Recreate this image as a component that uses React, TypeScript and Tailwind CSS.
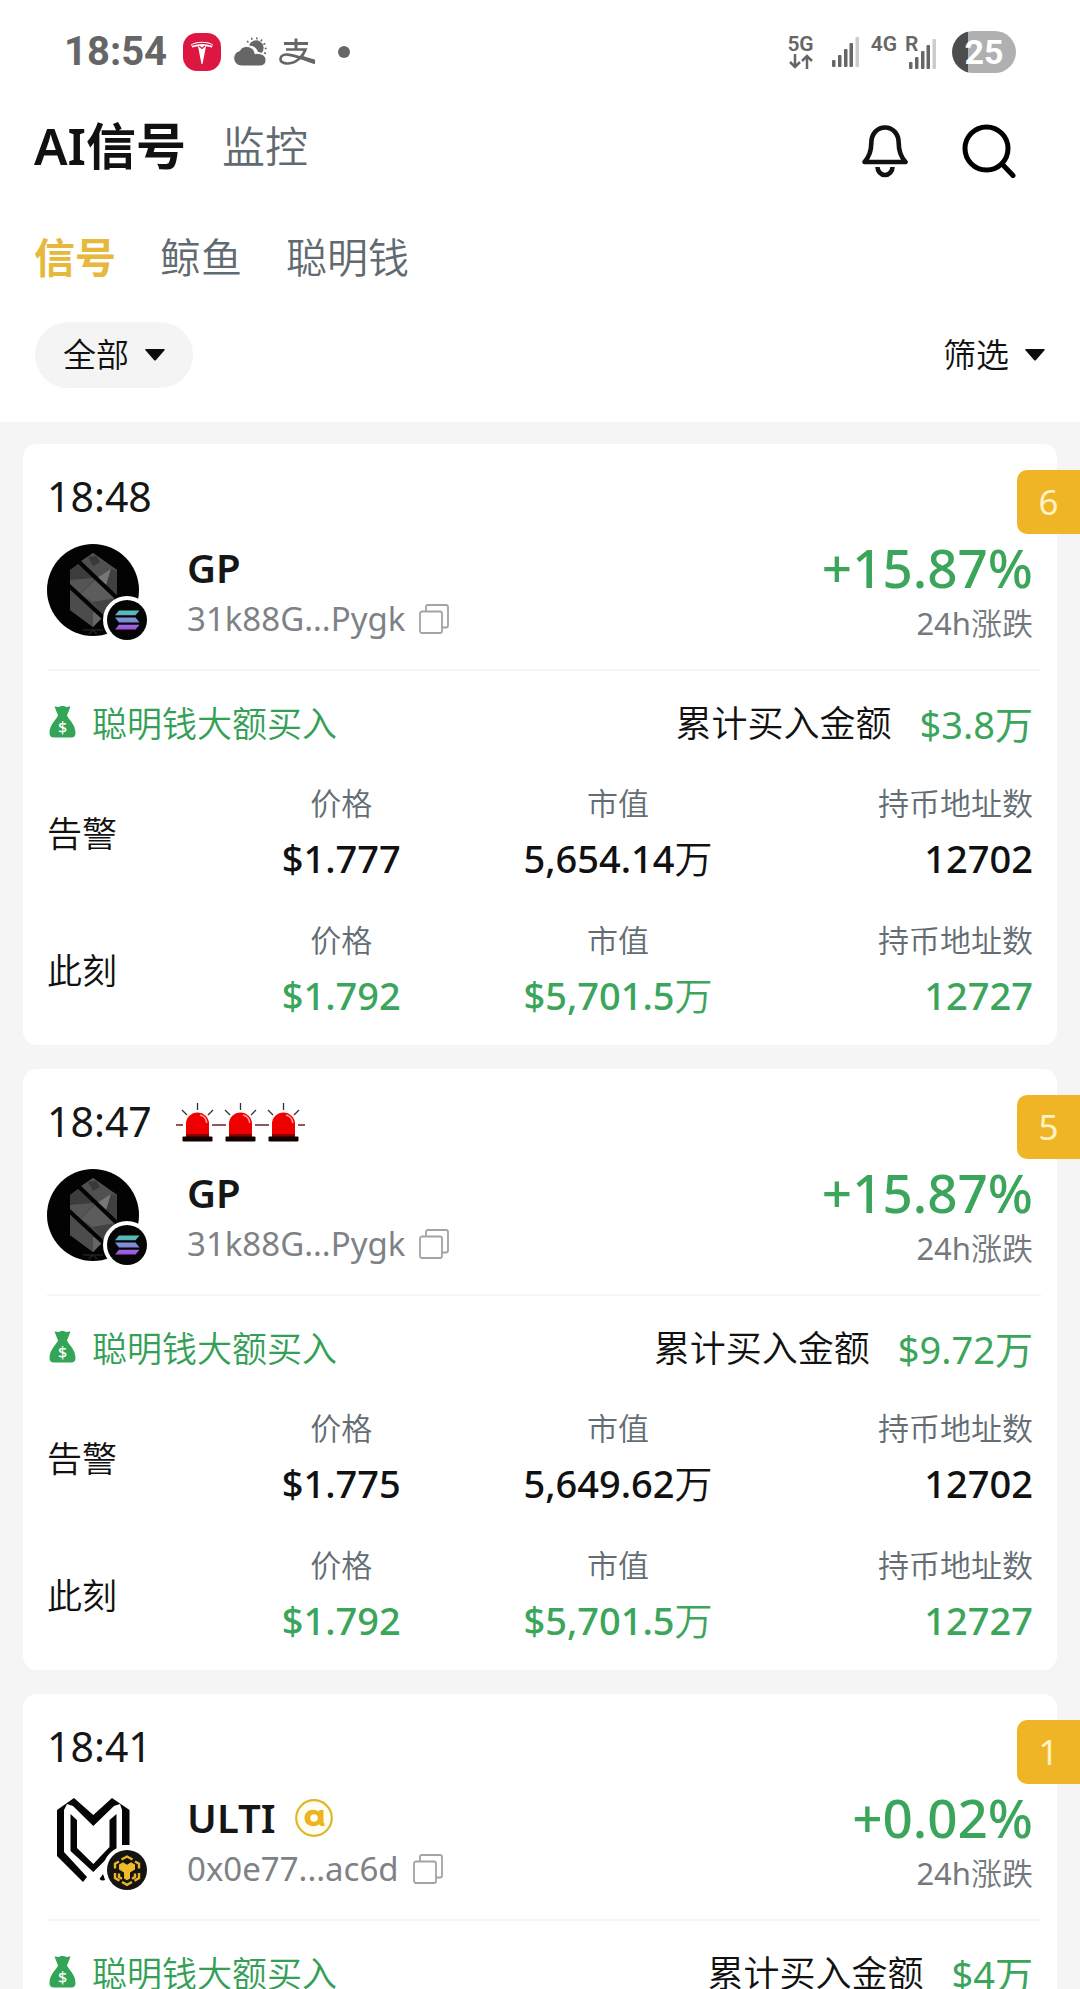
import { useState } from 'react';
import clsx from 'clsx';

interface Metric {
  label: string
  value: string
  unit?: string
}

interface SignalRow {
  title: string
  live: boolean
  metrics: Array<Metric>
}

interface Signal {
  id: number
  time: string
  sirens: number
  rank: number
  name: string
  alpha: boolean
  address: string
  chain: 'solana' | 'bnb'
  change: string
  amount: string
  rows: Array<SignalRow>
}

const buildRows = (alertPrice: string, alertCap: string): Array<SignalRow> => [
  {
    title: '告警',
    live: false,
    metrics: [
      { label: '价格', value: alertPrice },
      { label: '市值', value: alertCap, unit: '万' },
      { label: '持币地址数', value: '12702' },
    ],
  },
  {
    title: '此刻',
    live: true,
    metrics: [
      { label: '价格', value: '$1.792' },
      { label: '市值', value: '$5,701.5', unit: '万' },
      { label: '持币地址数', value: '12727' },
    ],
  },
]

const signals: Array<Signal> = [
  { id: 1, time: '18:48', sirens: 0, rank: 6, name: 'GP', alpha: false, address: '31k88G...Pygk', chain: 'solana', change: '+15.87%', amount: '$3.8万', rows: buildRows('$1.777', '5,654.14') },
  { id: 2, time: '18:47', sirens: 3, rank: 5, name: 'GP', alpha: false, address: '31k88G...Pygk', chain: 'solana', change: '+15.87%', amount: '$9.72万', rows: buildRows('$1.775', '5,649.62') },
  { id: 3, time: '18:41', sirens: 0, rank: 1, name: 'ULTI', alpha: true, address: '0x0e77...ac6d', chain: 'bnb', change: '+0.02%', amount: '$4万', rows: [] },
]

const TeslaIcon = () => (
  <svg width="38" height="38" viewBox="0 0 38 38" aria-hidden="true">
    <rect width="38" height="38" rx="14" fill="#dc1742" />
    <path d="M8 11.500c3-2 7-2.700 11-2.700s8 .7 11 2.700l-1.500 3.200c-1.800-1-3.800-1.400-5.500-1.500L19.500 31h-1L15 13.200c-1.700.1-3.700.5-5.500 1.500z" fill="#fff" />
    <path d="M9 12.200c6-2.200 14-2.200 20 0M16 13l3 2.500 3-2.500" fill="none" stroke="#dc1742" strokeWidth="1.200" />
  </svg>
)

const WeatherIcon = () => (
  <svg width="34" height="30" viewBox="0 0 34 30" fill="#666" aria-hidden="true">
    <path d="M16 8.500a7.500 7.500 0 1 1 12.500 7.600c-1.300-.8-2.500-1-3.500-1-1.300-4-4.500-6.500-9-6.600z" />
    <path d="M8 29a7.800 7.800 0 0 1-1.200-15.400C8 10.800 10.700 9.500 13.500 9.500c4.500 0 7.800 2.800 8.600 7.300.9-.3 1.800-.4 2.800-.3 4.400 0 8.100 2.500 8.100 6.500 0 3.700-2.700 6-6.200 6z" stroke="#fff" />
    <path d="M14 4l1.500 1.500M18.500.8l.6 2M24 .4l-.3 2M29 2.500l-1.200 1.700M32.300 6.500l-1.900 1M33.700 11.500h-2M33 16.500l-1.900-.8" stroke="#666" strokeWidth="1.500" />
  </svg>
)

const AlipayIcon = () => (
  <svg width="37" height="28" viewBox="0 0 37 28" fill="none" stroke="#666" aria-hidden="true">
    <path d="M5 5.500h24M17 .5v11" strokeWidth="3" />
    <path d="M7 11.500h19.500c-2 5.500-8 13.500-17.500 14-5 .2-7.800-2-7.500-4.700.3-3 3.500-4.600 7.500-4.200 8.500 1 17 5.400 27 7.900" strokeWidth="2.700" />
    <path d="M23 17.500c4 1.500 9 3.200 13 4v4.500c-5-1-10-3.500-15-6z" fill="#666" stroke="none" />
  </svg>
)

const SignalBars = () => (
  <svg width="27" height="30" viewBox="0 0 27 30" fill="#666" aria-hidden="true">
    <rect x="0" y="23" width="3.500" height="7" rx="1" />
    <rect x="6" y="18" width="3.500" height="12" rx="1" />
    <rect x="12" y="12" width="3.500" height="18" rx="1" />
    <rect x="17.500" y="6" width="3.500" height="24" rx="1" />
    <rect x="23.500" y="0" width="3.500" height="30" rx="1" fill="#ccc" />
  </svg>
)

const DataArrows = () => (
  <svg width="24" height="15" viewBox="0 0 24 15" fill="none" stroke="#666" strokeWidth="2.500" aria-hidden="true">
    <path d="M6 0v13M1 8l5 5 5-5M18 15V2M13 7l5-5 5 5" />
  </svg>
)

const BellIcon = () => (
  <svg width="46" height="53" viewBox="0 0 46 53" fill="none" stroke="#111" strokeLinejoin="round" aria-hidden="true">
    <path d="M2.500 37C7 32 9.300 26 9.300 18C9.300 9 15 2.500 23 2.500S36.700 9 36.700 18C36.700 26 39 32 43.500 37Z" strokeWidth="4.600" />
    <path d="M15.500 42a7.500 8 0 0 0 15 0" strokeWidth="4.600" />
  </svg>
)

const SearchIcon = () => (
  <svg width="54" height="54" viewBox="0 0 54 54" fill="none" stroke="#000" strokeWidth="5" strokeLinecap="round" aria-hidden="true">
    <circle cx="24.500" cy="24.500" r="21.500" />
    <path d="M41 41l10 10.500" />
  </svg>
)

const Caret = () => (
  <svg width="20" height="12" viewBox="0 0 20 12" fill="#0c0c0c" className="pointer-events-none" aria-hidden="true">
    <path d="M1 0h18q1.500 0 .5 1.200L11 11q-1 1-2 0L.5 1.200Q-.5 0 1 0z" />
  </svg>
)

const SirenIcon = () => (
  <svg width="43" height="39" viewBox="0 0 43 39" aria-hidden="true">
    <path d="M21.500 0v7M6 7l5 5M37 7l-5 5" stroke="#333" strokeWidth="1.300" />
    <path d="M0 22h7M36 22h7" stroke="#6b2020" strokeWidth="1.300" />
    <path d="M10 34V21a11.500 11.500 0 0 1 23 0v13z" fill="#ee0000" />
    <path d="M24 12c4 1 6.500 4.500 6.700 8" fill="none" stroke="#ff9c9c" strokeWidth="1.500" />
    <path d="M10 31h23v3H10z" fill="#8d0000" />
    <rect x="6.500" y="33.500" width="30" height="5" rx="1" fill="#120000" />
  </svg>
)

const CopyIcon = () => (
  <svg width="30" height="30" viewBox="0 0 30 30" fill="none" stroke="#a3a3a3" strokeWidth="1.800" aria-hidden="true">
    <rect x="1" y="7.500" width="22" height="21.500" rx="2" />
    <path d="M7 7V3q0-2 2-2h18q2 0 2 2v18.500q0 2-2 2h-4" />
  </svg>
)

const MoneyBagIcon = () => (
  <svg width="27" height="36" viewBox="0 0 27 36" aria-hidden="true">
    <path d="M5.500.6c1.700-.6 2.700.5 4 .3S12 0 13.500 0s2.700.7 4 .9 2.300-.9 4-.3L18 9.500C20 14 26.500 18.500 26.500 27c0 3.200-1.500 4.500-4.500 4.500H5C2 31.500.5 30.200.5 27 .5 18.500 7 14 9 9.500z" fill="#34a456" />
    <text x="13.500" y="27" textAnchor="middle" fontSize="16" fontWeight="500" fill="#fff">$</text>
  </svg>
)

const AlphaIcon = () => (
  <svg width="38" height="38" viewBox="0 0 38 38" aria-label="Alpha" role="img">
    <circle cx="19" cy="19" r="17.800" fill="#fffef2" stroke="#dfb62c" strokeWidth="2.200" />
    <path d="M24.500 11h4v12q0 1.200 1 1.200V27h-2.500q-2.300 0-3-1.800Q22 27.200 18.300 27.200C13 27.200 9.500 23.800 9.500 19s3.500-8.300 8.700-8.300q3.600 0 5.500 1.800zM19 15.200q-3.700 0-3.700 3.800t3.700 3.800 3.800-3.800-3.800-3.800z" fill="#eeb320" />
  </svg>
)

const CrystalLogo = () => (
  <svg width="92" height="92" viewBox="0 0 92 92" aria-hidden="true">
    <circle cx="46" cy="46" r="46" fill="#030303" />
    <path d="M46 9L70 26V54L46 83L23 66V26Z" fill="#4b4b4b" />
    <path d="M46 9L70 26L57 38L34 17Z" fill="#505050" />
    <path d="M41 13l8-1 4 6-7 4z" fill="#393939" />
    <path d="M23 26L34 19L48 34L23 36Z" fill="#3c3c3c" />
    <path d="M23 36L48 34L34 49L23 43Z" fill="#555" />
    <path d="M50 34L64 25L58 45Z" fill="#777" />
    <path d="M64 25l6 2v27l-12-9z" fill="#404040" />
    <path d="M48 36L68 54L46 58L34 50Z" fill="#5c5c5c" />
    <path d="M46 58L70 54L57 72Z" fill="#424242" />
    <path d="M23 48L46 68V83L23 66Z" fill="#4c4c4c" />
    <path d="M46 68l11 4-11 11z" fill="#666" />
    <path d="M30 16L72 56M20 40L60 77" stroke="#030303" strokeWidth="4" />
    <path d="M36 86h20M42 90l4-4 4 4" stroke="#222" strokeWidth="1.500" fill="none" />
  </svg>
)

const UltiLogo = () => (
  <svg width="92" height="92" viewBox="0 0 92 92" fill="#050505" aria-hidden="true">
    <path d="M27 4L10 16V62L36 88L40 83L17 58V16L20 10L26 12L46.300 32L67 12L73 10L75 16V51H82.500V16L65 4L46.300 21Z" />
    <path d="M23.500 20L30 26V54L46.300 70L62.500 53V26L69.500 20V55L46.300 78L23.500 57Z" />
    <path d="M56 80l3 5q-3.500 3-6.500 0z" />
  </svg>
)

const SolanaBadge = () => (
  <svg width="40" height="40" viewBox="0 0 40 40" aria-hidden="true">
    <defs>
      <linearGradient id="sol" x1="0" y1="0" x2="0" y2="1">
        <stop offset="0" stopColor="#4fc5b0" />
        <stop offset=".5" stopColor="#7d8fd8" />
        <stop offset="1" stopColor="#a94be0" />
      </linearGradient>
    </defs>
    <circle cx="20" cy="20" r="20" fill="#050505" />
    <path d="M12 10.500h20.500l-4 4.800H8zM8 17.600h20.500l4 4.800H12zM12 24.700h20.500l-4 4.800H8z" fill="url(#sol)" />
  </svg>
)

const BnbBadge = () => (
  <svg width="40" height="40" viewBox="0 0 40 40" fill="none" stroke="#e8b52b" strokeWidth="2.400" aria-hidden="true">
    <circle cx="20" cy="20" r="20" fill="#161410" stroke="none" />
    <path d="M14.500 9.500L20 6.500l5.500 3M28 11.500l4 2.300v4.700M32 23v5l-4.500 2.700M25 32l-5 2.800-5-2.800M12.500 30.700L8 28v-5M8 18.500v-4.700l4-2.300" />
    <path d="M12 14.500l4-2.200 4 2.500 4-2.500 4 2.200v5l-5 3v6L20 30.300l-3-1.800v-6l-5-3z" fill="#f0bb28" stroke="none" />
    <path d="M12 23.500v3.500l3 1.800M28 23.500v3.500l-3 1.800" />
  </svg>
)

const StatusBar = () => (
  <div className="flex h-[104px] items-center justify-between px-16 text-[#666]">
    <div className="flex items-center">
      <span className="font-[Roboto] text-[40px] font-bold leading-none">18:54</span>
      <div className="ml-4 flex items-center gap-3">
        <TeslaIcon />
        <WeatherIcon />
        <AlipayIcon />
      </div>
      <span className="ml-[22px] size-3 rounded-full bg-[#666]" />
    </div>
    <div className="flex items-center font-[Roboto] text-[21px] font-semibold leading-[18px]">
      <div className="flex flex-col items-center gap-px">
        <span>5G</span>
        <DataArrows />
      </div>
      <div className="ml-[18px]">
        <SignalBars />
      </div>
      <div className="ml-3 flex h-[34px] items-start">
        <span>4G</span>
      </div>
      <div className="relative ml-3 flex h-[34px] items-end">
        <span className="absolute -left-1 top-0">R</span>
        <SignalBars />
      </div>
      <div className="ml-4 flex h-[42px] w-16 items-center justify-center rounded-full bg-linear-to-r from-[#4d4d4d] from-25% to-[#b0b0b0] to-25% text-[34px] font-bold text-white">
        25
      </div>
    </div>
  </div>
)

const tabs = ['信号', '鲸鱼', '聪明钱']

const PageHeader = () => {
  const [tab, setTab] = useState(tabs[0])

  return <header className="bg-white">
    <StatusBar />
    <div className="flex h-[88px] items-center justify-between pl-[34px] pr-16">
      <div className="flex items-center gap-9 pb-1">
        <h1 className="text-[50px] font-semibold leading-none text-[#111]">AI信号</h1>
        <button type="button" className="text-[43px] font-[350] leading-none text-[#5f6a71]">监控</button>
      </div>
      <div className="flex items-center gap-[54px] pt-1.5">
        <button type="button" aria-label="通知"><BellIcon /></button>
        <button type="button" aria-label="搜索"><SearchIcon /></button>
      </div>
    </div>
    <nav className="flex h-[130px] items-center gap-11 pl-[34px]">
      {tabs.map((name) => <button
        key={name}
        type="button"
        onClick={() => setTab(name)}
        className={clsx('text-[41px] leading-none', name === tab ? 'font-semibold text-[#e6b83c]' : 'font-[350] text-[#5f6a71]')}
      >
        {name}
      </button>)}
    </nav>
    <div className="flex h-[100px] items-start justify-between px-[35px]">
      <label className="flex h-[66px] items-center gap-4 rounded-full bg-[#f4f4f4] px-7 text-[#111]">
        <select aria-label="类型" className="appearance-none text-[33px] font-[350] leading-10 [field-sizing:content]">
          <option>全部</option>
        </select>
        <Caret />
      </label>
      <label className="flex h-[66px] items-center gap-4 text-[#111]">
        <select aria-label="筛选" className="appearance-none text-[33px] font-[350] leading-10 [field-sizing:content]">
          <option>筛选</option>
        </select>
        <Caret />
      </label>
    </div>
  </header>
}

const TokenAvatar = (props: { chain: Signal['chain'] }) => (
  <div className="relative size-[92px] shrink-0">
    {props.chain === 'solana' ? <CrystalLogo /> : <UltiLogo />}
    <div className="absolute -bottom-2 -right-3 rounded-full border-4 border-white bg-white">
      {props.chain === 'solana' ? <SolanaBadge /> : <BnbBadge />}
    </div>
  </div>
)

const MetricTable = (props: { rows: Array<SignalRow> }) => (
  <table className="mt-6 w-full table-fixed">
    <tbody>
      {props.rows.map((row) => <tr key={row.title} className="h-[137px] align-top last:h-[129px]">
        <th scope="row" className="w-[156px] text-left text-[35px] font-[350] leading-[110px] text-[#111]">{row.title}</th>
        {row.metrics.map((metric) => <td key={metric.label} className="text-center last:text-right">
          <span className="block text-[31px] font-[350] leading-[48px] text-[#636d73]">{metric.label}</span>
          <span className={clsx('block text-[38px] font-medium leading-[62px]', row.live ? 'text-[#3ba55b]' : 'text-[#111]')}>
            {metric.value}
            {metric.unit && <span className="font-[350]">{metric.unit}</span>}
          </span>
        </td>)}
      </tr>)}
    </tbody>
  </table>
)

const SignalCard = (props: { signal: Signal }) => {
  const { time, sirens, rank, name, alpha, address, chain, change, amount, rows } = props.signal

  return <article className="relative rounded-[14px] bg-white px-6 pt-[29px]">
    <span className="absolute -right-[23px] top-[26px] flex h-16 w-[63px] items-center justify-center rounded-l-[10px] bg-[#f0b526] text-[35px] text-[#fff3c4]">
      {rank}
    </span>
    <div className="flex h-12 items-center gap-6 text-[41px] text-[#161616]">
      <time>{time}</time>
      {sirens > 0 && <div className="flex">
        {Array.from({ length: sirens }, (_, i) => <SirenIcon key={i} />)}
      </div>}
    </div>

    <div className="mt-[23px] flex h-[125px] items-start">
      <TokenAvatar chain={chain} />
      <div className="ml-12 flex-1">
        <div className="flex items-center gap-5 text-[40px] font-semibold leading-[48px] text-[#161616]">
          <h2>{name}</h2>
          {alpha && <AlphaIcon />}
        </div>
        <div className="flex items-center gap-3.5 text-[33px] leading-[54px] text-[#7e8286]">
          <span>{address}</span>
          <button type="button" aria-label="复制地址"><CopyIcon /></button>
        </div>
      </div>
      <div className="text-right">
        <div className="text-[53px] font-medium leading-[48px] text-[#3ba55b]">{change}</div>
        <div className="text-[31px] leading-[62px] text-[#74797e]">24h<span className="font-[350]">涨跌</span></div>
      </div>
    </div>

    <hr className="-mr-2 border-t-2 border-[#f6f6f6]" />

    <div className="mt-[22px] flex h-[62px] items-center justify-between leading-[48px]">
      <div className="flex items-center gap-4 pl-0.5 text-[35px] font-[350] text-[#34a056]">
        <MoneyBagIcon />
        <span>聪明钱大额买入</span>
      </div>
      <div className="flex items-center gap-7">
        <span className="text-[36px] font-[350] text-[#111]">累计买入金额</span>
        <span className="text-[38px] leading-[46px] text-[#3ba55b]">{amount}</span>
      </div>
    </div>

    {rows.length > 0 && <MetricTable rows={rows} />}
  </article>
}

export default function App() {
  return <div className="flex h-screen flex-col overflow-hidden bg-[#f5f5f5] font-['Noto_Sans','Noto_Sans_CJK_SC',sans-serif]">
    <PageHeader />
    <main className="flex min-h-0 flex-1 flex-col gap-6 overflow-y-auto px-[23px] pt-[22px] [scrollbar-width:none]">
      {signals.map((signal) => <div key={signal.id} className="shrink-0">
        <SignalCard signal={signal} />
      </div>)}
    </main>
  </div>
}
